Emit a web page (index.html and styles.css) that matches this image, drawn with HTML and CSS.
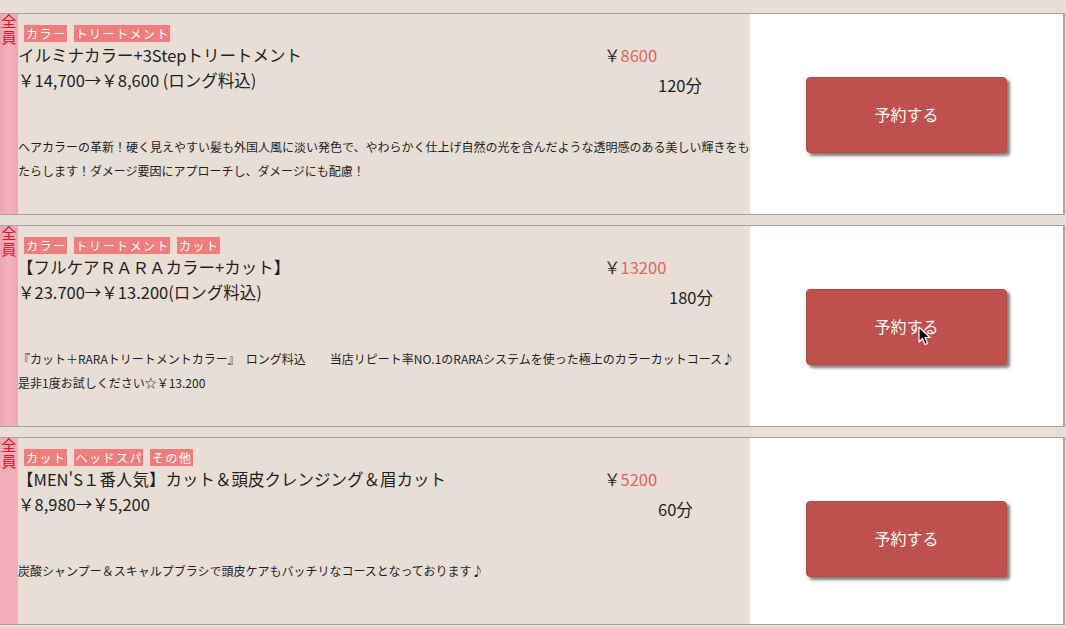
FILE: index.html
```html
<!DOCTYPE html>
<html lang="ja">
<head>
<meta charset="utf-8">
<title>メニュー</title>
<link rel="stylesheet" href="styles.css">
</head>
<body>
<div class="menu-list">

  <div class="menu-card">
    <div class="badge-col"><span class="all-staff">全員</span></div>
    <div class="info">
      <div class="tags"><span class="tag">カラー</span><span class="tag">トリートメント</span></div>
      <div class="head">
        <div class="name-block">
          <p class="name">イルミナカラー+3Stepトリートメント</p>
          <p class="price-line">￥14,700→￥8,600 (ロング料込)</p>
        </div>
        <div class="price-block">
          <p class="price">￥<span class="num">8600</span></p>
          <p class="time">120分</p>
        </div>
      </div>
      <p class="desc">ヘアカラーの革新！硬く見えやすい髪も外国人風に淡い発色で、やわらかく仕上げ自然の光を含んだような透明感のある美しい輝きをもたらします！ダメージ要因にアプローチし、ダメージにも配慮！</p>
    </div>
    <div class="action"><button class="reserve" type="button">予約する</button></div>
  </div>

  <div class="menu-card">
    <div class="badge-col"><span class="all-staff">全員</span></div>
    <div class="info">
      <div class="tags"><span class="tag">カラー</span><span class="tag">トリートメント</span><span class="tag">カット</span></div>
      <div class="head">
        <div class="name-block">
          <p class="name name--bracket">【フルケアＲＡＲＡカラー+カット】</p>
          <p class="price-line">￥23.700→￥13.200(ロング料込)</p>
        </div>
        <div class="price-block">
          <p class="price">￥<span class="num">13200</span></p>
          <p class="time time--wide">180分</p>
        </div>
      </div>
      <p class="desc">『カット＋RARAトリートメントカラー』　ロング料込　　当店リピート率NO.1のRARAシステムを使った極上のカラーカットコース♪<br>是非1度お試しください☆￥13.200</p>
    </div>
    <div class="action">
      <button class="reserve" type="button">予約する
        <svg class="cursor" width="14" height="20" viewBox="0 0 14 20"><path d="M1 1 L1 16 L4.5 12.5 L7 18.5 L9.5 17.5 L7 11.5 L12 11.5 Z" fill="#000" stroke="#fff" stroke-width="1.2" stroke-linejoin="round"/></svg>
      </button>
    </div>
  </div>

  <div class="menu-card menu-card--short">
    <div class="badge-col badge-col--solid"><span class="all-staff">全員</span></div>
    <div class="info">
      <div class="tags"><span class="tag">カット</span><span class="tag">ヘッドスパ</span><span class="tag">その他</span></div>
      <div class="head">
        <div class="name-block">
          <p class="name name--bracket">【MEN'S１番人気】カット＆頭皮クレンジング＆眉カット</p>
          <p class="price-line">￥8,980→￥5,200</p>
        </div>
        <div class="price-block">
          <p class="price">￥<span class="num">5200</span></p>
          <p class="time">60分</p>
        </div>
      </div>
      <p class="desc">炭酸シャンプー＆スキャルプブラシで頭皮ケアもバッチリなコースとなっております♪</p>
    </div>
    <div class="action"><button class="reserve" type="button">予約する</button></div>
  </div>

</div>
</body>
</html>
```

FILE: styles.css
```css
* { box-sizing: border-box; }

html, body {
  margin: 0;
  padding: 0;
  background: #e8ded5;
  font-family: "Noto Sans CJK JP", "Noto Sans", sans-serif;
  color: #1e1e1e;
}

body {
  padding-top: 13px;
}

p { margin: 0; }

.menu-list {
  display: flex;
  flex-direction: column;
  gap: 10px;
  width: 1065px;
}

.menu-card {
  display: grid;
  grid-template-columns: 18px 732px 1fr;
  height: 202px;
  border: 1px solid #a9a4a0;
  border-left: 0;
  border-right: 2px solid #a9a4a0;
  background: #e8ded5;
}

.menu-card--short {
  height: 188px;
}

.badge-col {
  background: linear-gradient(90deg, #efa3b2 0%, #f3b3c0 50%, #eea5b3 100%);
  display: flex;
  justify-content: center;
  align-items: flex-start;
  overflow: visible;
}

.badge-col--solid {
  background: #f3adb9;
}

.all-staff {
  display: block;
  writing-mode: vertical-rl;
  color: #e8101c;
  font-size: 15px;
  line-height: 17px;
  letter-spacing: 1px;
}

.info {
  padding-top: 10px;
  min-width: 0;
}

.tags {
  display: flex;
  gap: 5px;
  padding-left: 5px;
  height: 19px;
}

.tag {
  display: inline-block;
  background: #ee7e7e;
  color: #fff;
  border: 1px solid #f6d6d3;
  font-size: 12px;
  line-height: 17px;
  letter-spacing: 1.5px;
  padding: 0 0 0 2px;
}

.head {
  display: grid;
  grid-template-columns: 586px 1fr;
}

.name,
.price-line {
  font-size: 16.5px;
  line-height: 25px;
  white-space: nowrap;
}

.name--bracket {
  margin-left: -1px;
}

.price {
  font-size: 16.5px;
  line-height: 25px;
  color: #333;
}

.price .num {
  color: #e06464;
}

.time {
  font-size: 16.5px;
  line-height: 25px;
  margin-top: 5px;
  padding-left: 54px;
}

.time--wide {
  padding-left: 65px;
}

.desc {
  margin-top: 37px;
  font-size: 12px;
  line-height: 24px;
  color: #1e1e1e;
}

.action {
  background: #fff;
  display: flex;
  justify-content: center;
  align-items: flex-start;
  padding-top: 63px;
}

.reserve {
  position: relative;
  width: 201px;
  height: 76px;
  background: #c0504d;
  border: 1px solid #b44845;
  border-radius: 4px;
  box-shadow: 3px 3px 3px #85807d;
  color: #fff;
  font-family: "Noto Sans CJK JP", sans-serif;
  font-size: 16px;
  cursor: pointer;
  padding: 0 0 3px;
}

.cursor {
  position: absolute;
  left: 111px;
  top: 36px;
}
```
